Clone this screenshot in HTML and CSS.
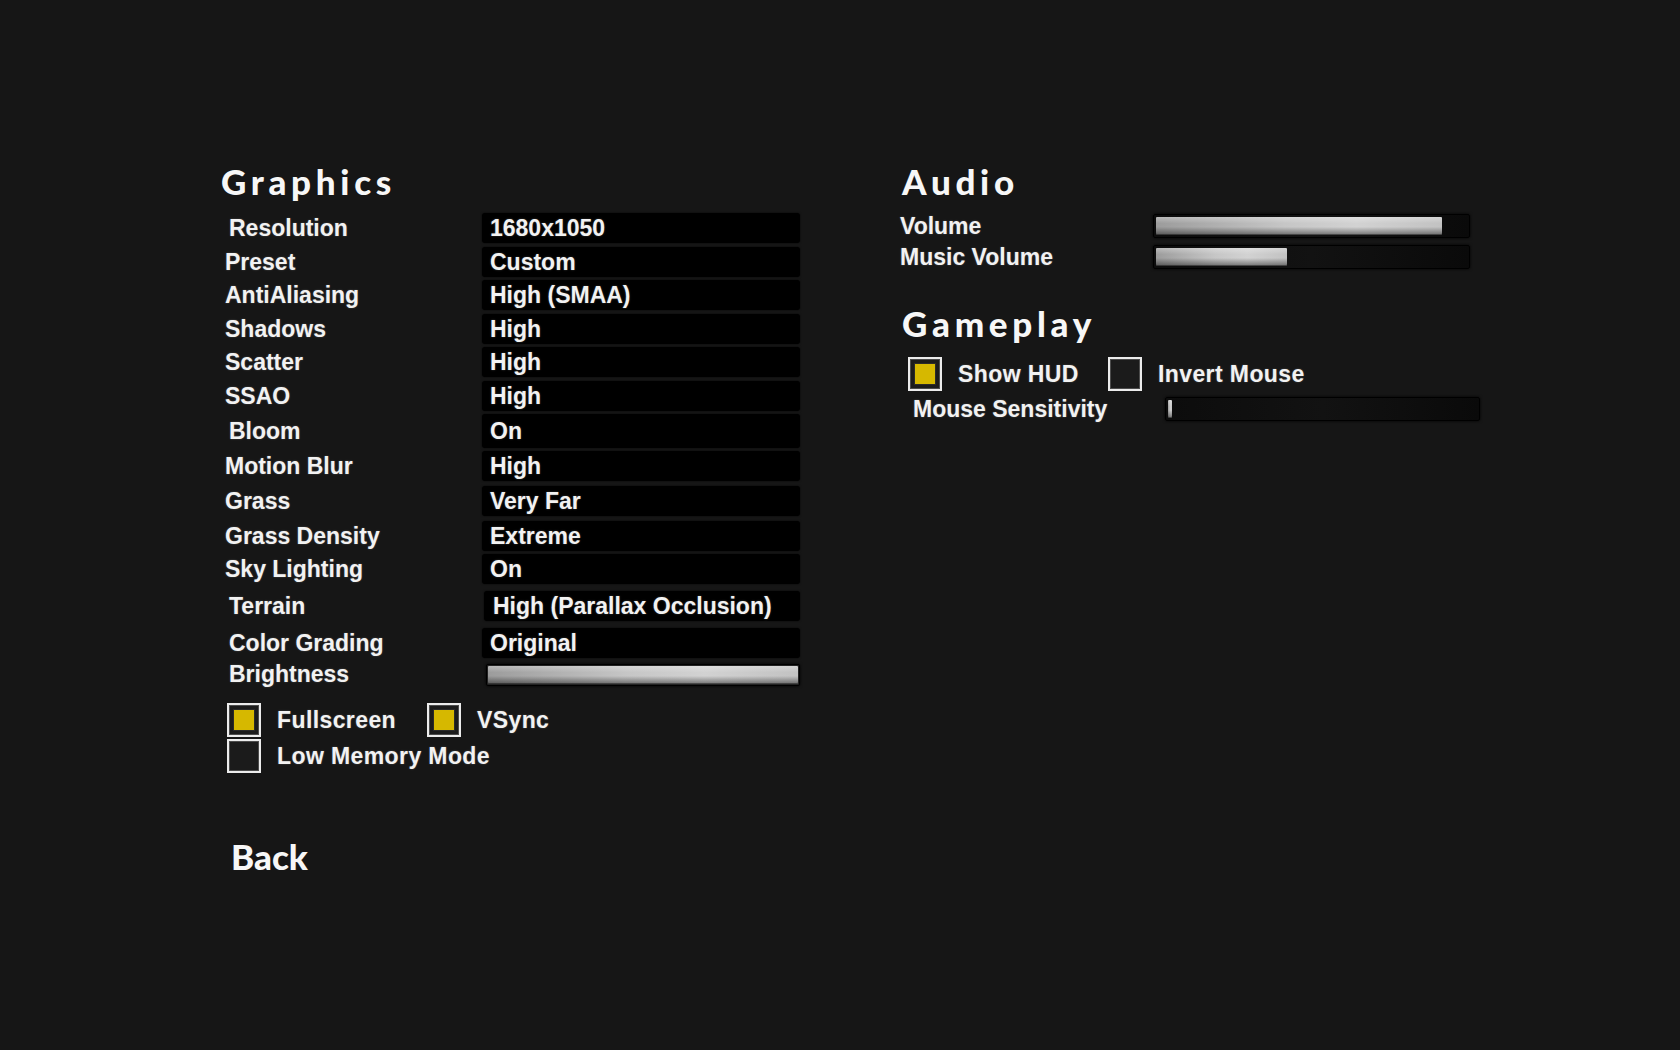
FILE: index.html
```html
<!DOCTYPE html>
<html lang="en">
<head>
    <meta charset="UTF-8">
    <title>Options</title>
    <link rel="stylesheet" href="styles.css">
</head>
<body>

    <div class="menu">

        <!-- Graphics -->
        <section class="graphics">
            <h2 class="title">Graphics</h2>

            <div class="rows">
                <div class="row indent"><span class="label">Resolution</span><span class="value">1680x1050</span></div>
                <div class="row"><span class="label">Preset</span><span class="value">Custom</span></div>
                <div class="row"><span class="label">AntiAliasing</span><span class="value">High (SMAA)</span></div>
                <div class="row"><span class="label">Shadows</span><span class="value">High</span></div>
                <div class="row"><span class="label">Scatter</span><span class="value">High</span></div>
                <div class="row"><span class="label">SSAO</span><span class="value">High</span></div>
                <div class="row tall indent"><span class="label">Bloom</span><span class="value">On</span></div>
                <div class="row gap-3"><span class="label">Motion Blur</span><span class="value">High</span></div>
                <div class="row gap-5"><span class="label">Grass</span><span class="value">Very Far</span></div>
                <div class="row gap-5"><span class="label">Grass Density</span><span class="value">Extreme</span></div>
                <div class="row gap-3"><span class="label">Sky Lighting</span><span class="value">On</span></div>
                <div class="row gap-7 indent"><span class="label">Terrain</span><span class="value push">High (Parallax Occlusion)</span></div>
                <div class="row gap-7 indent"><span class="label">Color Grading</span><span class="value">Original</span></div>
                <div class="row gap-1 indent"><span class="label">Brightness</span>
                    <div class="slider flat"><div class="fill" style="width: 100%"></div></div>
                </div>
            </div>

            <div class="checks">
                <div class="check-line">
                    <div class="check on"><span class="box"></span>Fullscreen</div>
                    <div class="check on"><span class="box"></span>VSync</div>
                </div>
                <div class="check-line">
                    <div class="check wide"><span class="box"></span>Low Memory Mode</div>
                </div>
            </div>

            <div class="back">Back</div>
        </section>

        <!-- Audio + Gameplay -->
        <section class="side">
            <h2 class="title">Audio</h2>

            <div class="srow">
                <span class="label">Volume</span>
                <div class="slider"><div class="fill" style="width: 92%"></div></div>
            </div>
            <div class="srow music">
                <span class="label">Music Volume</span>
                <div class="slider"><div class="fill" style="width: 42%"></div></div>
            </div>

            <h2 class="title gameplay">Gameplay</h2>

            <div class="check-line hud">
                <div class="check on"><span class="box"></span>Show HUD</div>
                <div class="check"><span class="box"></span>Invert Mouse</div>
            </div>

            <div class="srow mouse">
                <span class="label">Mouse Sensitivity</span>
                <div class="slider"><div class="fill" style="width: 1.3%"></div></div>
            </div>
        </section>

    </div>

</body>
</html>
```

FILE: styles.css
```css
body {
    margin: 0;
    background-color: #161616;
    color: #f2f2f2;
    font-family: "Liberation Sans", Arial, sans-serif;
    font-weight: 700;
    font-size: 23px;
}
.menu {
    display: flex;
    padding: 161px 0 0 222px;
}
.graphics {
    width: 578px;
}
.side {
    width: 580px;
    margin-left: 100px;
}
.title {
    margin: 0 0 12px -1px;
    font-family: Lato, sans-serif;
    font-weight: 900;
    font-size: 35px;
    line-height: 40px;
    letter-spacing: 4.7px;
    color: #f7f7f7;
}
.side .title {
    margin-left: 2px;
}
.label {
    white-space: nowrap;
    text-shadow: 0 0 2px rgba(255, 255, 255, 0.25);
}

/* graphics rows */
.row {
    display: grid;
    grid-template-columns: 260px 318px;
    height: 30px;
    line-height: 30px;
    margin-top: 3.5px;
}
.row:first-child {
    margin-top: 0;
}
.row.gap-1 { margin-top: 1px; }
.row.gap-3 { margin-top: 3px; }
.row.gap-5 { margin-top: 5px; }
.row.gap-7 { margin-top: 7px; }
.row.tall {
    height: 34px;
    line-height: 34px;
}
.row .label {
    padding-left: 3px;
}
.row.indent .label {
    padding-left: 7px;
}
.value {
    background: #000;
    border-radius: 3px;
    padding-left: 8px;
    box-shadow: 0 0 2px rgba(0, 0, 0, 0.8);
    white-space: nowrap;
    text-shadow: 0 0 2px rgba(255, 255, 255, 0.25);
}
.value.push {
    padding-left: 9px;
    margin-left: 2px;
}

/* sliders */
.slider {
    box-sizing: border-box;
    height: 24px;
    padding: 2px;
    background: linear-gradient(to right, #0c0c0c, #121212 50%, #0a0a0a);
    border: 1px solid #000;
    border-radius: 2px;
    box-shadow: 0 0 3px #000;
}
.slider.flat {
    align-self: center;
    height: 22px;
    margin: 2px 0 0 4px;
    padding: 1px;
    background: #222;
}
.fill {
    height: 100%;
    border-radius: 1px;
    background:
        linear-gradient(to bottom, rgba(255, 255, 255, 0.3), rgba(255, 255, 255, 0) 35%, rgba(0, 0, 0, 0) 55%, rgba(0, 0, 0, 0.45)),
        linear-gradient(to right, #9c9c9c, #c6c6c6 45%, #d2d2d2 70%, #c2c2c2);
    box-shadow: inset 0 -1px 0 rgba(0, 0, 0, 0.4);
}

/* checkboxes */
.checks {
    margin-top: 14px;
    padding-left: 5px;
}
.check-line {
    display: flex;
    margin-bottom: 2px;
}
.check {
    display: flex;
    align-items: center;
    gap: 16px;
    width: 200px;
    height: 34px;
    white-space: nowrap;
    letter-spacing: 0.4px;
    text-shadow: 0 0 2px rgba(255, 255, 255, 0.25);
}
.check.wide {
    width: auto;
}
.box {
    box-sizing: border-box;
    width: 34px;
    height: 34px;
    border: 2px solid #ececec;
    background: #1b1b1b;
    box-shadow: inset 0 0 0 1px #4c4c4c;
    display: flex;
    align-items: center;
    justify-content: center;
}
.check.on .box::after {
    content: "";
    width: 20px;
    height: 20px;
    background: #d6b800;
    box-shadow: 0 0 0 1px #2a2a2a;
}

.back {
    margin-top: 63px;
    padding-left: 9px;
    font-family: Lato, sans-serif;
    font-weight: 900;
    font-size: 35px;
    line-height: 40px;
    color: #f7f7f7;
}

/* audio / gameplay */
.srow {
    display: grid;
    grid-template-columns: 253px 317px;
    align-items: center;
    height: 26px;
    line-height: 26px;
}
.srow.music {
    margin-top: 5px;
}
.title.gameplay {
    margin-top: 33px;
    margin-bottom: 14px;
}
.check-line.hud {
    padding-left: 8px;
    margin-bottom: 0;
}
.srow.mouse {
    margin-top: 5px;
    grid-template-columns: 265px 315px;
}
.srow.mouse .label {
    padding-left: 13px;
}
```
